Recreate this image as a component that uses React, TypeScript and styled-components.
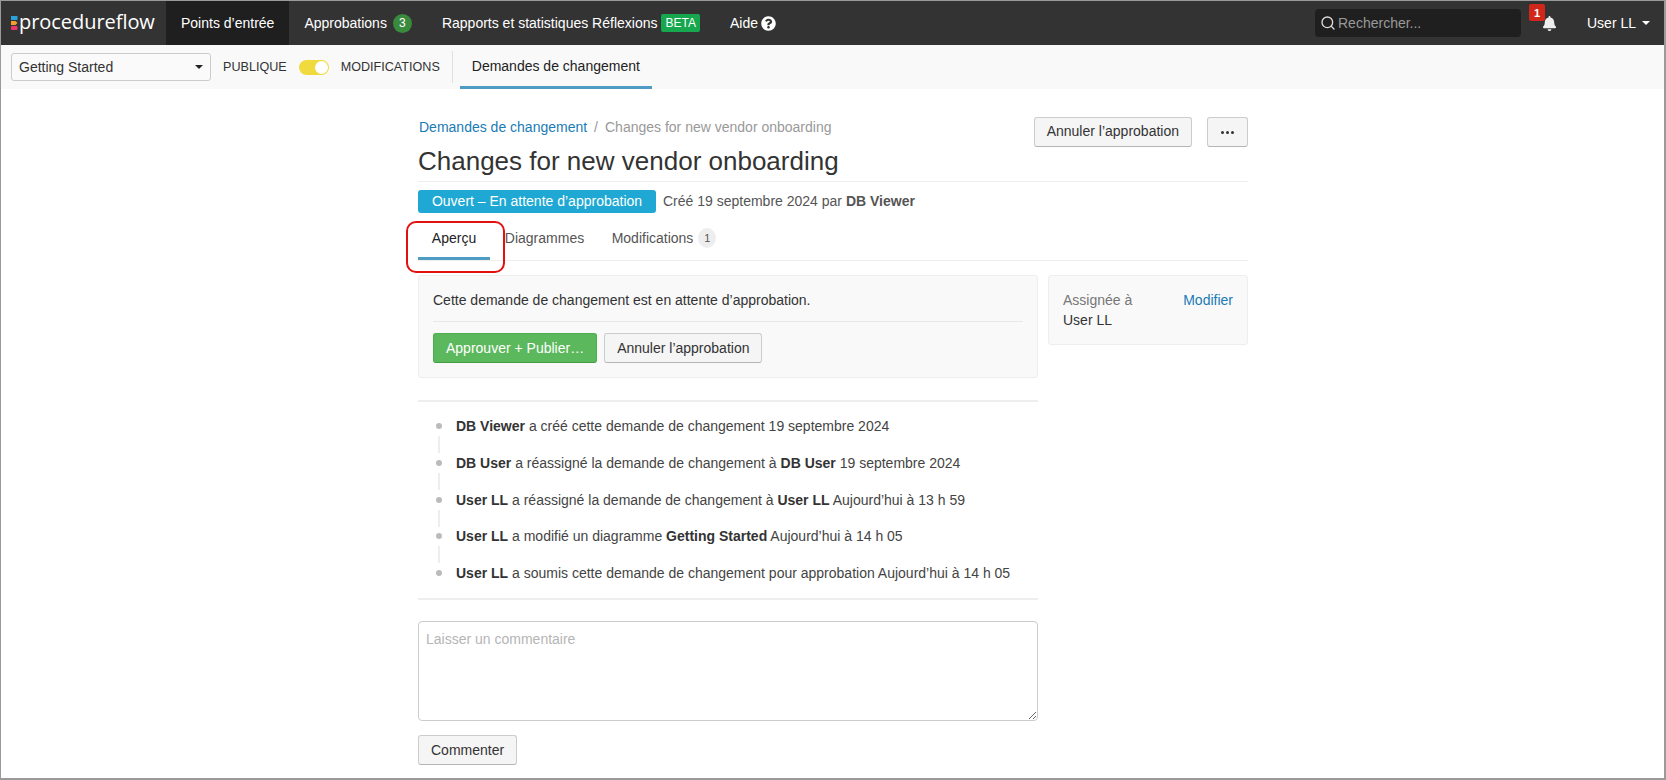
import React from 'react'
import styled, { createGlobalStyle } from 'styled-components'
import { FaBell, FaQuestionCircle } from 'react-icons/fa'
import { Search } from 'lucide-react'

const Global = createGlobalStyle`
  html, body { margin:0; padding:0; background:#fff; }
  body { font-family:"Liberation Sans", Arial, sans-serif; font-size:14px; color:#333; line-height:20px; }
  * { box-sizing:border-box; }
`;
const Frame = styled.div`
  position:relative;
  width:1666px;
  height:780px;
  border-style:solid;
  border-color:#9a9a9a;
  border-width:1px 2px 2px 1px;
  overflow:hidden;
  background:#fff;
`;
const Navbar = styled.div`
  height:44px;
  background:#333;
  display:flex;
  align-items:stretch;
  color:#fff;
`;
const LogoWrap = styled.div`
  width:165px;
  display:flex;
  align-items:center;
  padding-left:10px;
  gap:1px;
`;
const LogoText = styled.span`
  font-family:"Open Sans", sans-serif;
  font-weight:400;
  font-size:20px;
  letter-spacing:-0.05px;
  color:#fff;
  position:relative;
  top:-1px;
`;
const NavItem = styled.div<{ $active?: boolean; $gap?: number }>`
  display:flex;
  align-items:center;
  padding:0 15px;
  background:${p => p.$active ? '#1f1f1f' : 'transparent'};
  color:#fff;
  font-size:14px;
  gap:${p => p.$gap || 5}px;
`;
const CountBadge = styled.span`
  width:19px;
  height:19px;
  border-radius:50%;
  background:#3a8a3e;
  font-size:12px;
  display:flex;
  align-items:center;
  justify-content:center;
`;
const BetaTag = styled.span`
  height:18px;
  padding:0 4px;
  border-radius:2px;
  background:#17a74f;
  font-size:12px;
  display:flex;
  align-items:center;
`;
const NavSpacer = styled.div`
  flex:1;
`;
const SearchBox = styled.div`
  width:206px;
  height:28px;
  margin-top:8px;
  border-radius:4px;
  background:#1f1f1f;
  display:flex;
  align-items:center;
  padding-left:5px;
  gap:2px;
  color:#999;
  font-size:14px;
`;
const BellWrap = styled.div`
  position:relative;
  width:66px;
  display:flex;
  align-items:center;
  padding-left:21px;
  color:#eee;
`;
const AlertBadge = styled.span`
  position:absolute;
  left:8px;
  top:3px;
  width:16px;
  height:17px;
  border-radius:2px;
  background:#d0271a;
  color:#fff;
  font-size:11px;
  font-weight:bold;
  display:flex;
  align-items:center;
  justify-content:center;
`;
const UserMenu = styled.div`
  width:77px;
  display:flex;
  align-items:center;
  gap:6px;
`;
const Caret = styled.span<{ $dark?: boolean }>`
  width:0;
  height:0;
  border-left:4px solid transparent;
  border-right:4px solid transparent;
  border-top:4px solid ${p => p.$dark ? '#222' : '#fff'};
`;
const SubBar = styled.div`
  height:44px;
  background:#f9f9f9;
  display:flex;
  align-items:flex-start;
`;
const ProjectSelect = styled.div`
  width:200px;
  height:28px;
  margin:8px 12px 0 10px;
  padding:0 7px 0 7px;
  border:1px solid #ccc;
  border-radius:3px;
  display:flex;
  align-items:center;
  justify-content:space-between;
  font-size:14px;
  color:#333;
  background:#fafafa;
`;
const ModeLabel = styled.span`
  font-size:12.6px;
  color:#333;
  margin-top:12px;
`;
const Toggle = styled.span`
  position:relative;
  width:30px;
  height:15px;
  border-radius:8px;
  background:#f0da3e;
  margin:15px 12px 0;
`;
const Knob = styled.span`
  position:absolute;
  right:1px;
  top:1px;
  width:13px;
  height:13px;
  border-radius:50%;
  background:#fff;
`;
const SubDivider = styled.div`
  width:1px;
  height:32px;
  background:#e0e0e0;
  margin:6px 7px 0 12px;
`;
const SubTab = styled.div`
  width:192px;
  height:44px;
  border-bottom:3px solid #4e9bc4;
  color:#222;
  display:flex;
  align-items:center;
  justify-content:center;
  font-size:14px;
  padding-top:1px;
`;
const Page = styled.div`
  width:830px;
  margin-left:417px;
`;
const HeaderRow = styled.div`
  display:flex;
  justify-content:space-between;
  align-items:flex-start;
  padding-top:28px;
`;
const Breadcrumb = styled.div`
  font-size:14px;
  color:#999;
  line-height:20px;
  padding-left:1px;
  display:flex;
  gap:7px;
`;
const Link = styled.a`
  color:#1a7bb5;
`;
const ButtonGroup = styled.div`
  display:flex;
  gap:15px;
`;
const Button = styled.button<{ $primary?: boolean }>`
  font-family:inherit;
  font-size:14px;
  height:30px;
  padding:0 12px;
  border-radius:3px;
  border:1px solid ${p => p.$primary ? '#4cae4c' : '#ccc'};
  border-bottom-color:${p => p.$primary ? '#449d44' : '#b5b5b5'};
  background:${p => p.$primary ? '#5cb85c' : '#f5f5f5'};
  color:${p => p.$primary ? '#fff' : '#333'};
  display:flex;
  align-items:center;
`;
const HeaderButton = styled(Button)`
  padding-bottom:2px;
`;
const Title = styled.h1`
  margin:-1px 0 0;
  font-size:26px;
  font-weight:normal;
  line-height:30px;
  color:#333;
  padding-bottom:5px;
  border-bottom:1px solid #eee;
`;
const StatusRow = styled.div`
  display:flex;
  align-items:center;
  gap:7px;
  margin-top:8px;
  color:#555;
`;
const StatusLabel = styled.span`
  height:23px;
  width:238px;
  padding-bottom:2px;
  background:#1ea8d3;
  color:#fff;
  border-radius:3px;
  display:flex;
  align-items:center;
  justify-content:center;
`;
const StatusText = styled.span`
  padding-bottom:2px;
`;
const Tabs = styled.div`
  display:flex;
  height:48px;
  border-bottom:1px solid #eee;
`;
const Tab = styled.div<{ $active?: boolean; $width: number }>`
  width:${p => p.$width}px;
  display:flex;
  align-items:center;
  justify-content:center;
  gap:5px;
  color:${p => p.$active ? '#222' : '#555'};
  border-bottom:${p => p.$active ? '3px solid #4e9bc4' : 'none'};
  padding-top:${p => p.$active ? '6px' : '3px'};
`;
const TabBadge = styled.span`
  width:18px;
  height:20px;
  border-radius:50%;
  background:#eee;
  font-size:11px;
  color:#555;
  display:flex;
  align-items:center;
  justify-content:center;
`;
const Columns = styled.div`
  display:flex;
  gap:10px;
  margin-top:14px;
  align-items:flex-start;
`;
const MainColumn = styled.div`
  width:620px;
`;
const Panel = styled.div`
  background:#f9f9f9;
  border:1px solid #eee;
  border-radius:3px;
`;
const ApprovalPanel = styled(Panel)`
  height:103px;
  padding:14px 14px 0;
`;
const PanelText = styled.div`
  color:#333;
  padding-bottom:11px;
  border-bottom:1px solid #e8e8e8;
`;
const PanelButtons = styled.div`
  display:flex;
  gap:7px;
  margin-top:11px;
`;
const SidePanel = styled(Panel)`
  width:200px;
  height:70px;
  padding:14px;
`;
const SideRow = styled.div`
  display:flex;
  justify-content:space-between;
`;
const Muted = styled.span`
  color:#777;
`;
const Timeline = styled.ul`
  list-style:none;
  margin:22px 0 0;
  padding:6px 0 8px;
  border-top:2px solid #eee;
  border-bottom:2px solid #eee;
`;
const Event = styled.li`
  position:relative;
  padding-left:38px;
  height:36.75px;
  padding-top:8px;
  font-size:14px;
  white-space:nowrap;
  color:#444;
  b { color:#333; }
  &:last-child { height:35px; }
  &::before {
    content:"";
    position:absolute;
    left:18px;
    top:15px;
    width:6px;
    height:6px;
    border-radius:50%;
    background:#bbb;
  }
  &:not(:last-child)::after {
    content:"";
    position:absolute;
    left:20px;
    top:28px;
    width:2px;
    height:17px;
    background:#eee;
  }
`;
const CommentBox = styled.textarea`
  display:block;
  width:620px;
  height:100px;
  margin-top:21px;
  padding:7px 7px;
  border:1px solid #ccc;
  border-radius:4px;
  font-family:inherit;
  font-size:14px;
  line-height:20px;
  resize:vertical;
  outline:none;
  &::placeholder { color:#b5b5b5; }
`;
const SubmitRow = styled.div`
  margin-top:14px;
`;
const Callout = styled.div`
  position:absolute;
  left:405px;
  top:220px;
  width:99px;
  height:52px;
  border:2px solid #e2110f;
  border-radius:10px;
  pointer-events:none;
`;

const Logo = () => (
  <svg width="7" height="14" viewBox="0 0 7 14">
    <rect x="0" y="0" width="6.5" height="4" fill="#2a9fd8" />
    <path d="M0 5h4.5l2 2-2 2H0z" fill="#f0a030" />
    <rect x="0" y="10" width="6.5" height="4" rx="1" fill="#e8336d" />
  </svg>
);

const Dots = () => (
  <svg width="15" height="3" viewBox="0 0 15 3" fill="#333">
    <circle cx="2.5" cy="1.5" r="1.5" />
    <circle cx="7.5" cy="1.5" r="1.5" />
    <circle cx="12.5" cy="1.5" r="1.5" />
  </svg>
);

export default function App() {
  return (
    <>
      <Global />
      <Frame>
        <Navbar>
          <LogoWrap>
            <Logo />
            <LogoText>procedureflow</LogoText>
          </LogoWrap>
          <NavItem $active>Points d’entrée</NavItem>
          <NavItem $gap={6}>Approbations <CountBadge>3</CountBadge></NavItem>
          <NavItem $gap={4}>Rapports et statistiques Réflexions <BetaTag>BETA</BetaTag></NavItem>
          <NavItem $gap={3}>Aide <FaQuestionCircle size={15} /></NavItem>
          <NavSpacer />
          <SearchBox><Search size={16} color="#ddd" />Rechercher...</SearchBox>
          <BellWrap>
            <FaBell size={15} />
            <AlertBadge>1</AlertBadge>
          </BellWrap>
          <UserMenu>User LL <Caret /></UserMenu>
        </Navbar>
        <SubBar>
          <ProjectSelect>Getting Started <Caret $dark /></ProjectSelect>
          <ModeLabel>PUBLIQUE</ModeLabel>
          <Toggle><Knob /></Toggle>
          <ModeLabel>MODIFICATIONS</ModeLabel>
          <SubDivider />
          <SubTab>Demandes de changement</SubTab>
        </SubBar>
        <Page>
          <HeaderRow>
            <Breadcrumb>
              <Link>Demandes de changement</Link>
              <span>/</span>
              <span>Changes for new vendor onboarding</span>
            </Breadcrumb>
            <ButtonGroup>
              <HeaderButton>Annuler l’approbation</HeaderButton>
              <Button><Dots /></Button>
            </ButtonGroup>
          </HeaderRow>
          <Title>Changes for new vendor onboarding</Title>
          <StatusRow>
            <StatusLabel>Ouvert – En attente d’approbation</StatusLabel>
            <StatusText>Créé 19 septembre 2024 par <b>DB Viewer</b></StatusText>
          </StatusRow>
          <Tabs>
            <Tab $active $width={72}>Aperçu</Tab>
            <Tab $width={109}>Diagrammes</Tab>
            <Tab $width={130}>Modifications <TabBadge>1</TabBadge></Tab>
          </Tabs>
          <Columns>
            <MainColumn>
              <ApprovalPanel>
                <PanelText>Cette demande de changement est en attente d’approbation.</PanelText>
                <PanelButtons>
                  <Button $primary>Approuver + Publier…</Button>
                  <Button>Annuler l’approbation</Button>
                </PanelButtons>
              </ApprovalPanel>
              <Timeline>
                <Event><b>DB Viewer</b> a créé cette demande de changement 19 septembre 2024</Event>
                <Event><b>DB User</b> a réassigné la demande de changement à <b>DB User</b> 19 septembre 2024</Event>
                <Event><b>User LL</b> a réassigné la demande de changement à <b>User LL</b> Aujourd’hui à 13 h 59</Event>
                <Event><b>User LL</b> a modifié un diagramme <b>Getting Started</b> Aujourd’hui à 14 h 05</Event>
                <Event><b>User LL</b> a soumis cette demande de changement pour approbation Aujourd’hui à 14 h 05</Event>
              </Timeline>
              <CommentBox placeholder="Laisser un commentaire" />
              <SubmitRow><Button>Commenter</Button></SubmitRow>
            </MainColumn>
            <SidePanel>
              <SideRow><Muted>Assignée à</Muted><Link>Modifier</Link></SideRow>
              <div>User LL</div>
            </SidePanel>
          </Columns>
        </Page>
        <Callout />
      </Frame>
    </>
  )
}
